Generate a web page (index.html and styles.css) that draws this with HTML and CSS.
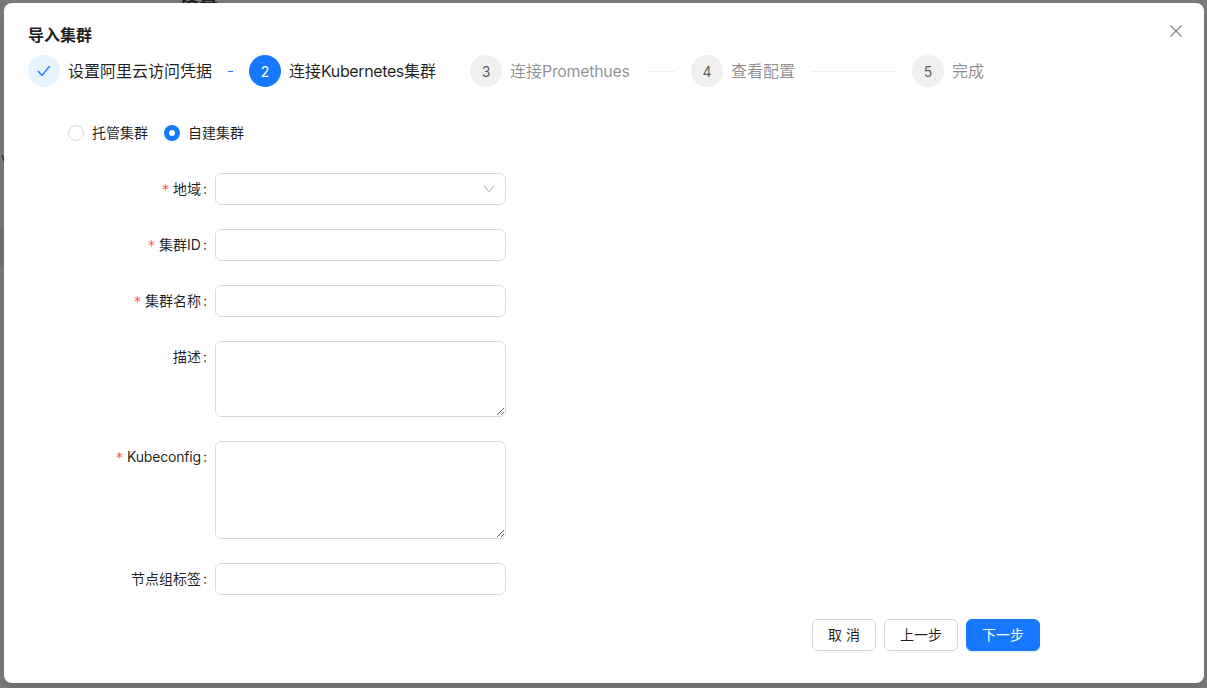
FILE: index.html
```html
<!DOCTYPE html>
<html lang="zh-CN">
<head>
<meta charset="utf-8">
<title>导入集群</title>
<link rel="stylesheet" href="styles.css">
</head>
<body>
<div class="page-heading">设置</div>
<div class="page-letter">v</div>
<div class="page-row"></div>
<main class="modal">
  <svg class="close" viewBox="0 0 12 12"><path d="M.5 .5l11 11M11.5 .5l-11 11"/></svg>
  <h1 class="title">导入集群</h1>
  <div class="steps">
    <div class="step step-done"><span class="step-icon"><svg class="check" viewBox="0 0 14 12"><path d="M1 6l4 4.5L12.7 1"/></svg></span><span class="step-title">设置阿里云访问凭据</span><i class="step-tail"></i></div>
    <div class="step step-active"><span class="step-icon">2</span><span class="step-title">连接<span class="latin-kube">Kubernetes</span>集群</span><i class="step-tail"></i></div>
    <div class="step"><span class="step-icon">3</span><span class="step-title">连接<span class="latin-prom">Promethues</span></span><i class="step-tail"></i></div>
    <div class="step"><span class="step-icon">4</span><span class="step-title">查看配置</span><i class="step-tail"></i></div>
    <div class="step"><span class="step-icon">5</span><span class="step-title">完成</span></div>
  </div>
  <div class="radios">
    <label class="radio"><span class="dot"></span>托管集群</label>
    <label class="radio"><span class="dot dot-on"></span>自建集群</label>
  </div>
  <form class="form">
    <div class="row"><span class="label required">地域</span><div class="control select"><svg class="arrow" viewBox="0 0 12 8"><path d="M1 .7l5 6.2L11 .7"/></svg></div></div>
    <div class="row"><span class="label required">集群ID</span><input class="control"></div>
    <div class="row"><span class="label required">集群名称</span><input class="control"></div>
    <div class="row"><span class="label">描述</span><textarea class="control area-small"></textarea></div>
    <div class="row"><span class="label required"><span class="latin-label">Kubeconfig</span></span><textarea class="control area-large"></textarea></div>
    <div class="row"><span class="label">节点组标签</span><input class="control"></div>
  </form>
  <div class="footer">
    <button class="btn">取 消</button>
    <button class="btn btn-wide">上一步</button>
    <button class="btn btn-wide btn-primary">下一步</button>
  </div>
</main>
</body>
</html>
```
FILE: styles.css
```css
* { box-sizing: border-box; }
body {
  margin: 0;
  height: 688px;
  padding: 3px 3px 5px 4px;
  overflow: hidden;
  background: #7b7a7a;
  color: rgba(0, 0, 0, .88);
  font: 14px/22px Inter, "Noto Sans CJK SC", sans-serif;
}
.page-heading { position: absolute; left: 180px; top: -15px; font-size: 19px; font-weight: 700; color: #1c1c1c; }
.page-letter { position: absolute; left: 1px; top: 147px; color: #222; }
.page-row { position: absolute; left: 0; top: 227px; width: 4px; height: 40px; background: #737272; }
.modal {
  position: relative;
  width: 1200px;
  height: 680px;
  padding: 20px 24px;
  background: #fff;
  border-radius: 8px;
  box-shadow: 0 6px 16px rgba(0, 0, 0, .08), 0 3px 6px -4px rgba(0, 0, 0, .12);
}
.close { position: absolute; left: 1166px; top: 22px; width: 12px; height: 12px; fill: none; stroke: #858585; stroke-width: 1.2; }
.title { margin: 0; height: 32px; font-size: 16px; line-height: 24px; font-weight: 600; }
.steps { display: grid; grid-template-columns: repeat(5, 221px); height: 32px; }
.step { display: flex; align-items: center; color: rgba(0, 0, 0, .45); font-size: 16px; line-height: 32px; }
.step-icon {
  flex: none;
  width: 32px;
  height: 32px;
  margin-right: 8px;
  border-radius: 50%;
  background: #f0f0f0;
  color: rgba(0, 0, 0, .65);
  font-size: 14px;
  line-height: 33px;
  text-align: center;
}
.step-title { flex: none; white-space: nowrap; }
.step-tail { flex: 1; height: 1px; margin: 0 16px; background: #f0f0f0; }
.step-done, .step-active { color: rgba(0, 0, 0, .88); }
.step-done .step-icon { display: flex; align-items: center; justify-content: center; background: #e6f4ff; }
.step-done .step-tail { background: #1677ff; }
.step-active .step-icon { background: #1677ff; color: #fff; }
.check { width: 14px; height: 12px; fill: none; stroke: #1677ff; stroke-width: 1.3; }
.latin-kube { letter-spacing: -.38px; }
.latin-prom { letter-spacing: -.33px; }
.latin-label { letter-spacing: -.18px; }
.radios { display: flex; gap: 16px; padding: 35px 40px 29px; }
.radio { display: flex; align-items: center; gap: 8px; }
.dot { width: 16px; height: 16px; border: 1px solid #d9d9d9; border-radius: 50%; }
.dot-on { border: 5px solid #1677ff; }
.form { display: flex; flex-direction: column; gap: 24px; }
.row { display: flex; align-items: flex-start; }
.label { width: 187px; padding-right: 8px; line-height: 32px; text-align: right; }
.label::after { content: ":"; margin-left: 2px; }
.required::before { content: "*"; margin-right: 4px; color: #ff4d4f; font-family: "DejaVu Sans", sans-serif; }
.control { display: block; width: 291px; height: 32px; margin: 0; padding: 4px 11px; border: 1px solid #d9d9d9; border-radius: 6px; background: #fff; font: inherit; }
.select { display: flex; align-items: center; justify-content: flex-end; }
.arrow { width: 12px; height: 8px; margin-right: -1px; fill: none; stroke: #bfbfbf; stroke-width: 1.1; }
.area-small { height: 76px; }
.area-large { height: 98px; }
.footer { display: flex; gap: 8px; justify-content: flex-end; padding: 24px 140px 0 0; }
.btn { width: 64px; height: 32px; padding: 0; border: 1px solid #d9d9d9; border-radius: 6px; background: #fff; color: rgba(0, 0, 0, .88); font: inherit; box-shadow: 0 2px 0 rgba(0, 0, 0, .02); }
.btn-wide { width: 74px; }
.btn-primary { border-color: #1677ff; background: #1677ff; color: #fff; box-shadow: 0 2px 0 rgba(5, 145, 255, .1); }
```
